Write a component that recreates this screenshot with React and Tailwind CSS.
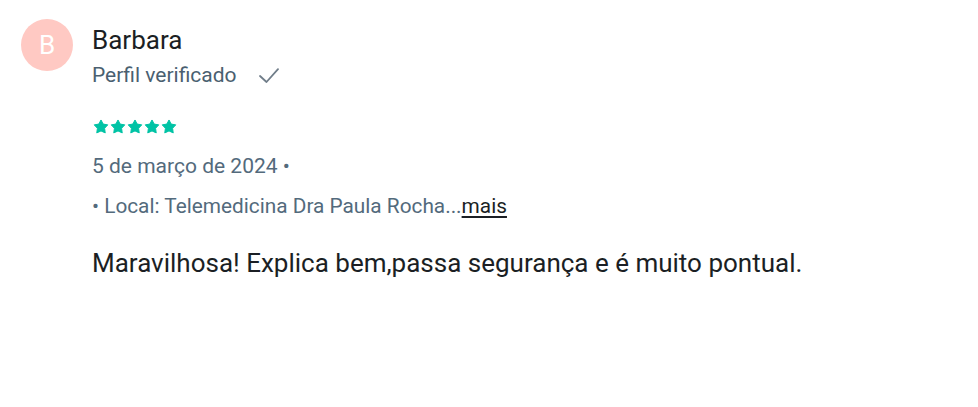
function Star() {
  return (
    <svg viewBox="0 0 24 23" className="w-[16px] h-[15px]" fill="#00c3a5" stroke="#00c3a5" strokeWidth="1.5" strokeLinejoin="round">
      <path d="M12 1.5L15.4 7.8L22.4 9L17.5 14.3L18.5 21.3L12 18.3L5.5 21.3L6.5 14.3L1.6 9L8.6 7.8Z" />
    </svg>
  );
}

function Tick() {
  return (
    <svg viewBox="0 0 20 15" className="w-[20px] h-[15px]" fill="none" stroke="#707d89" strokeWidth="1.8" strokeLinecap="round" strokeLinejoin="round">
      <path d="M1 8l6.5 6L19 1.2" />
    </svg>
  );
}

export default function App() {
  return (
    <div className="w-[978px] h-[407px] bg-white font-['Roboto',sans-serif]">
      <div className="flex gap-[19px] pt-[19px] pl-[21px]">
        <div className="w-[52px] h-[52px] rounded-full bg-[#ffc9c3] flex items-center justify-center text-white text-[26px] shrink-0">
          B
        </div>
        <div className="flex flex-col">
          <div className="text-[26px] leading-[30px] text-[#1b1f24] mt-[6px]">Barbara</div>
          <div className="flex items-center gap-[22px] mt-[7px] text-[21px] leading-[26px] text-[#4a5f70]">
            <span>Perfil verificado</span>
            <Tick />
          </div>
          <div className="flex gap-[1px] mt-[31px] ml-[1px]">
            <Star />
            <Star />
            <Star />
            <Star />
            <Star />
          </div>
          <div className="text-[21px] leading-[26px] text-[#536a7c] mt-[19px]">5 de março de 2024 •</div>
          <div className="text-[20.8px] leading-[26px] text-[#536a7c] mt-[14px]">
            • Local: Telemedicina Dra Paula Rocha...<span className="underline underline-offset-[3px] text-[#1b1f24]">mais</span>
          </div>
          <div className="text-[26px] leading-[30px] text-[#1b1f24] mt-[29px]">
            Maravilhosa! Explica bem,passa segurança e é muito pontual.
          </div>
        </div>
      </div>
    </div>
  );
}
